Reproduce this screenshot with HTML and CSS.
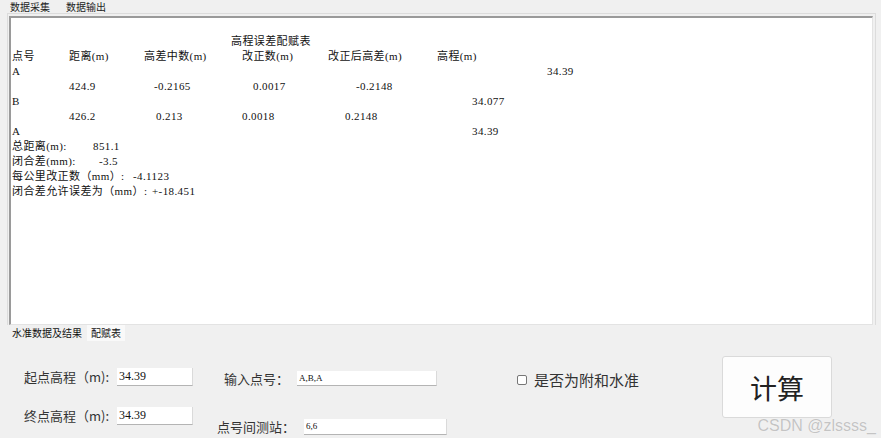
FILE: index.html
```html
<!DOCTYPE html>
<html>

<head>
    <meta charset="UTF-8">
    <link rel="stylesheet" href="styles.css">
</head>

<body>
    <div class="menubar">
        <span>数据采集</span>
        <span>数据输出</span>
    </div>

    <div class="tabs">
        <div class="page">
            <div class="output">
                <div class="line"></div>
                <div class="line title">高程误差配赋表</div>
                <div class="grid">
                    <span>点号</span><span>距离(m)</span><span>高差中数(m)</span><span>改正数(m)</span><span>改正后高差(m)</span><span class="c6">高程(m)</span>

                    <span class="c1">A</span><span class="c8">34.39</span>

                    <span class="c2">424.9</span><span class="i10">-0.2165</span><span class="i11">0.0017</span><span class="i28">-0.2148</span>

                    <span class="c1">B</span><span class="c7">34.077</span>

                    <span class="c2">426.2</span><span class="i12">0.213</span><span>0.0018</span><span class="i17">0.2148</span>

                    <span class="c1">A</span><span class="c7">34.39</span>
                </div>
                <div class="line"><span class="lbl w81">总距离(m):</span>851.1</div>
                <div class="line"><span class="lbl w87">闭合差(mm):</span>-3.5</div>
                <div class="line"><span class="lbl w121">每公里改正数（mm）:</span>-4.1123</div>
                <div class="line"><span class="lbl w140">闭合差允许误差为（mm）:</span>+-18.451</div>
            </div>
        </div>
        <div class="tabstrip">
            <span class="tab current">水准数据及结果</span>
            <span class="tab">配赋表</span>
        </div>
    </div>

    <div class="form">
        <div class="group g1">
            <div class="row">
                <label>起点高程（m):</label>
                <input type="text" class="field f1" value="34.39" readonly>
            </div>
            <div class="row r2">
                <label>终点高程（m):</label>
                <input type="text" class="field f1" value="34.39" readonly>
            </div>
        </div>
        <div class="group g2">
            <div class="row">
                <label class="l-in">输入点号：</label>
                <input type="text" class="field f2" value="A,B,A" readonly>
            </div>
            <div class="row r2b">
                <label class="l-st">点号间测站：</label>
                <input type="text" class="field f3" value="6,6" readonly>
            </div>
        </div>
        <label class="check"><input type="checkbox">是否为附和水准</label>
        <button class="calc">计算</button>
    </div>

    <div class="mark">CSDN @zlssss_</div>
</body>

</html>
```

FILE: styles.css
```css
body{
    margin: 0;
    width: 881px;
    height: 438px;
    overflow: hidden;
    position: relative;
    background: #f0f0f0;
    font-family: "Noto Sans CJK SC", sans-serif;
    color: #111;
}

.menubar{
    height: 12px;
    padding: 1px 0 0 10px;
    display: flex;
    gap: 16px;
    font-size: 10px;
    line-height: 11px;
    color: #222;
}

.tabs{
    margin-left: 7px;
    width: 869px;
}
.page{
    box-sizing: border-box;
    border: 1px solid #dcdcdc;
    border-bottom: 0;
    padding: 2px 2px 0 1px;
}
.output{
    box-sizing: border-box;
    height: 309px;
    background: #fff;
    border-top: 2px solid #9a9a9a;
    border-left: 2px solid #9a9a9a;
    border-right: 1px solid #e3e3e3;
    border-bottom: 1px solid #e3e3e3;
    padding: 1px 0 0 1px;
    font-family: "Liberation Serif", "Noto Sans CJK SC", serif;
    font-size: 11px;
    letter-spacing: 0.4px;
    line-height: 15px;
    white-space: nowrap;
}
.line{
    height: 15px;
}
.title{
    padding-left: 219px;
}
.grid{
    display: grid;
    grid-template-columns: 57px 75px 98px 86px 109px 35px 75px auto;
    grid-auto-rows: 15px;
}
.c1{ grid-column: 1; }
.c2{ grid-column: 2; }
.c6{ grid-column: 6 / span 2; }
.c7{ grid-column: 7; }
.c8{ grid-column: 8; }
.i10{ padding-left: 10px; }
.i11{ padding-left: 11px; }
.i12{ padding-left: 12px; }
.i17{ padding-left: 17px; }
.i28{ padding-left: 28px; }

.lbl{
    display: inline-block;
}
.w81{ width: 81px; }
.w87{ width: 87px; }
.w121{ width: 121px; }
.w140{ width: 140px; }

.tabstrip{
    display: flex;
    align-items: flex-start;
    gap: 2px;
    height: 17px;
    padding-left: 2px;
}
.tab{
    font-size: 10px;
    line-height: 15px;
    padding: 0 3px;
    color: #111;
}
.tab:not(.current){
    background: #f9f9f9;
    line-height: 16px;
    padding: 0 4px;
}

.form{
    display: flex;
    align-items: flex-start;
    padding: 25px 0 0 24px;
    color: #333;
}
.group{
    display: flex;
    flex-direction: column;
}
.row{
    display: flex;
    align-items: center;
}
.g1 label{
    font-size: 13px;
    width: 93px;
}
.g1 .r2{
    margin-top: 20px;
}
.field{
    box-sizing: border-box;
    border: 0;
    border-bottom: 1px solid #b4b4b4;
    border-right: 1px solid #dadada;
    background: #fff;
    padding: 0 2px;
    margin: 0;
    outline: none;
    font-family: "Liberation Serif", "Noto Sans CJK SC", serif;
    color: #111;
}
.f1{
    width: 76px;
    height: 18px;
    font-size: 12px;
}
.g2{
    margin: 2px 0 0 24px;
}
.l-in{
    font-size: 13px;
    width: 73px;
    padding-left: 7px;
}
.l-st{
    font-size: 13px;
    width: 87px;
}
.g2 .r2b{
    margin-top: 29px;
}
.f2{
    width: 140px;
    height: 15px;
    font-size: 9px;
}
.f3{
    width: 143px;
    height: 16px;
    font-size: 9px;
}

.check{
    display: flex;
    align-items: center;
    margin: 0 0 0 70px;
    padding-top: 3px;
    font-size: 15px;
    color: #333;
    line-height: 20px;
}
.check input{
    appearance: none;
    width: 10px;
    height: 10px;
    margin: 0 7px 0 0;
    border: 1px solid #777;
    border-radius: 2px;
    background: #fff;
}

.calc{
    margin: -11px 0 0 83px;
    width: 110px;
    height: 62px;
    background: #fdfdfd;
    border: 1px solid #dadada;
    border-radius: 3px;
    font-family: "Noto Sans CJK SC", sans-serif;
    font-size: 27px;
    color: #222;
    padding: 0;
}

.mark{
    position: absolute;
    right: 5px;
    bottom: 3px;
    font-family: "Liberation Sans", sans-serif;
    font-size: 16px;
    color: #c4c4c4;
    text-shadow: 0 0 1px #fff;
}
```
